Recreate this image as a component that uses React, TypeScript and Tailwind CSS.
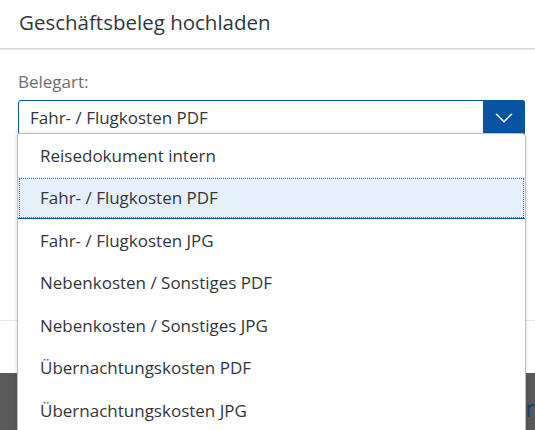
import { ChevronDown } from "lucide-react";

const options = [
  "Reisedokument intern",
  "Fahr- / Flugkosten PDF",
  "Fahr- / Flugkosten JPG",
  "Nebenkosten / Sonstiges PDF",
  "Nebenkosten / Sonstiges JPG",
  "Übernachtungskosten PDF",
  "Übernachtungskosten JPG",
];

const selected = "Fahr- / Flugkosten PDF";

export default function App() {
  return (
    <div
      className="relative w-[535px] h-[430px] overflow-hidden bg-white text-[#32363a]"
      style={{ fontFamily: '"Open Sans", "Noto Sans", Arial, sans-serif' }}
    >
      {/* dialog */}
      <div className="flex flex-col h-[373px] bg-white">
        <div className="h-[49px] flex items-center px-[19px] border-b border-[#d9d9d9] shadow-[0_1px_1px_rgba(0,0,0,0.08)]">
          <h1 className="text-[20.5px] leading-none text-[#32363a] -mt-[4px]">Geschäftsbeleg hochladen</h1>
        </div>
        <div className="flex-1 pl-[18px] pr-[10px] pt-[24px]">
          <label className="block text-[17px] leading-none text-[#6a6d70] mb-[10px]">Belegart:</label>
          <div className="flex h-[35px] border border-[#0854a0] rounded-[3px] bg-white">
            <div className="flex-1 flex items-center pl-[11px] text-[17px]">{selected}</div>
            <div className="w-[42px] bg-[#0854a0] flex items-center justify-center -my-px -mr-px rounded-r-[3px]">
              <ChevronDown className="w-[30px] h-[30px] text-white" strokeWidth={1.2} />
            </div>
          </div>
        </div>
        <div className="h-[53px] border-t border-[#e5e5e5]" />
      </div>
      {/* backdrop */}
      <div className="h-[57px] bg-[#595959] flex justify-end items-center">
        <span className="text-[23px] leading-none text-[#173f6c] pt-[14px]">er</span>
      </div>

      {/* dropdown list */}
      <div className="absolute left-[17px] top-[133px] w-[509px] h-[310px] bg-white border border-[#bfbfbf] rounded-tr-[4px] shadow-[0_0_4px_rgba(0,0,0,0.15)]">
        <ul>
          {options.map((o) => (
            <li
              key={o}
              className={
                o === selected
                  ? "h-[42.5px] flex items-center pl-[22px] text-[17px] bg-[#e5f0fa] outline-1 outline-dotted outline-[#5f6b78] -outline-offset-[2px] border-b border-[#0854a0]"
                  : "h-[42.5px] flex items-center pl-[22px] text-[17px]"
              }
            >
              {o}
            </li>
          ))}
        </ul>
      </div>
    </div>
  );
}
